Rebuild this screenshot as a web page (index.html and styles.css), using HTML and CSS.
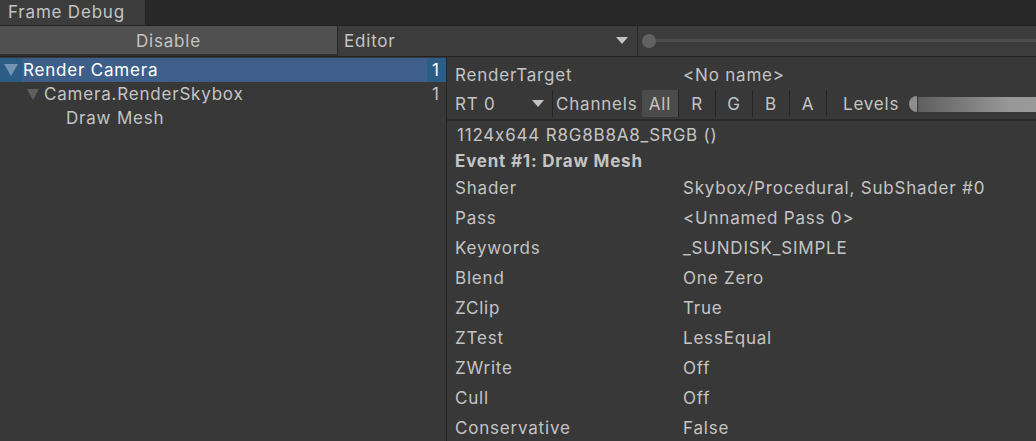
FILE: index.html
```html
<!DOCTYPE html>
<html>
<head>
<meta charset="utf-8">
<link rel="stylesheet" href="styles.css">
</head>
<body>
<div class="window">
  <div class="tabbar">
    <div class="tab">Frame Debug</div>
  </div>
  <div class="toolbar">
    <div class="btn-disable">Disable</div>
    <div class="dropdown">
      <span>Editor</span>
      <svg class="arrow" width="12" height="8" viewBox="0 0 12 8"><path d="M0 0h12L6 7z" fill="#c4c4c4"/></svg>
    </div>
    <div class="event-slider">
      <div class="knob"></div>
      <div class="track"></div>
    </div>
  </div>
  <div class="main">
    <div class="tree">
      <div class="row selected">
        <div class="tri-cell"><svg width="14" height="12" viewBox="0 0 14 12"><path d="M0 0h14L7 12z" fill="#7593b3"/></svg></div>
        <div class="label">Render Camera</div>
        <div class="count">1</div>
      </div>
      <div class="row">
        <div class="indent1"></div>
        <div class="tri-cell"><svg width="12" height="11" viewBox="0 0 12 11"><path d="M0 0h12L6 11z" fill="#5f5f5f"/></svg></div>
        <div class="label">Camera.RenderSkybox</div>
        <div class="count">1</div>
      </div>
      <div class="row">
        <div class="indent2"></div>
        <div class="label">Draw Mesh</div>
      </div>
    </div>
    <div class="details">
      <div class="rt-row">
        <div class="key">RenderTarget</div>
        <div class="val">&lt;No name&gt;</div>
      </div>
      <div class="channels">
        <div class="rt-select"><span>RT 0</span><svg width="12" height="8" viewBox="0 0 12 8"><path d="M0 0h12L6 7z" fill="#c4c4c4"/></svg></div>
        <div class="ch-label">Channels</div>
        <div class="ch active">All</div>
        <div class="ch">R</div>
        <div class="ch">G</div>
        <div class="ch">B</div>
        <div class="ch">A</div>
        <div class="levels">Levels</div>
        <div class="levels-bar"><div class="lv-knob"></div><div class="lv-grad"></div></div>
      </div>
      <div class="info">1124x644 R8G8B8A8_SRGB ()</div>
      <div class="event">Event #1: Draw Mesh</div>
      <div class="props">
        <div class="prop"><div class="key">Shader</div><div class="val">Skybox/Procedural, SubShader #0</div></div>
        <div class="prop"><div class="key">Pass</div><div class="val">&lt;Unnamed Pass 0&gt;</div></div>
        <div class="prop"><div class="key">Keywords</div><div class="val">_SUNDISK_SIMPLE</div></div>
        <div class="prop"><div class="key">Blend</div><div class="val">One Zero</div></div>
        <div class="prop"><div class="key">ZClip</div><div class="val">True</div></div>
        <div class="prop"><div class="key">ZTest</div><div class="val">LessEqual</div></div>
        <div class="prop"><div class="key">ZWrite</div><div class="val">Off</div></div>
        <div class="prop"><div class="key">Cull</div><div class="val">Off</div></div>
        <div class="prop"><div class="key">Conservative</div><div class="val">False</div></div>
      </div>
    </div>
  </div>
</div>
</body>
</html>
```
FILE: styles.css
```css
* { box-sizing: border-box; }
html, body { margin: 0; padding: 0; }
body {
  background: #383838;
  font-family: Inter, "Noto Sans", sans-serif;
  font-size: 17px;
  letter-spacing: 0.8px;
  color: #c4c4c4;
  width: 1036px;
  height: 441px;
  overflow: hidden;
}
.window { display: flex; flex-direction: column; height: 441px; }

.tabbar {
  height: 25px;
  background: #282828;
  display: flex;
}
.tab {
  width: 146px;
  background: #3c3c3c;
  padding-left: 8px;
  line-height: 25px;
  color: #c4c4c4;
  border-right: 1px solid #232323;
}

.toolbar {
  height: 32px;
  background: #3c3c3c;
  display: flex;
  border-top: 1px solid #232323;
  border-bottom: 1px solid #232323;
}
.btn-disable {
  width: 338px;
  background: #505050;
  text-align: center;
  line-height: 29px;
  padding-top: 1px;
  border-right: 1px solid #262626;
  border-bottom: 2px solid #2f2f2f;
}
.dropdown {
  width: 300px;
  display: flex;
  align-items: center;
  justify-content: space-between;
  padding: 0 9px 0 6px;
  border-right: 1px solid #2a2a2a;
  padding-bottom: 1px;
}
.event-slider {
  flex: 1;
  display: flex;
  align-items: center;
  padding-left: 4px;
  padding-bottom: 1px;
}
.knob {
  width: 14px; height: 14px; border-radius: 50%;
  background: #616161;
  flex: none;
}
.track {
  flex: 1;
  height: 3px;
  background: #4c4c4c;
}

.main { flex: 1; display: flex; }
.tree {
  width: 447px;
  border-right: 1px solid #232323;
  padding-top: 1px;
}
.row {
  height: 24px;
  display: flex;
  align-items: center;
}
.row.selected { background: #3e5f8a; color: #ffffff; }
.tri-cell {
  width: 22px; height: 24px;
  display: flex; align-items: center; justify-content: center;
}
.row.selected .tri-cell { background: #2c5d87; }
.row:not(.selected) .tri-cell { width: 20px; }
.indent1 { width: 23px; }
.indent2 { width: 65px; }
.label { flex: 1; padding-left: 1px; }
.count {
  width: 19px;
  height: 24px;
  line-height: 24px;
  text-align: left;
  padding-left: 5px;
}
.row.selected .count { background: #2c5d87; }

.details { flex: 1; padding-top: 3px; }
.rt-row {
  height: 29px;
  display: flex;
  align-items: center;
  padding-left: 8px;
}
.key { width: 228px; flex: none; }
.channels {
  height: 32px;
  display: flex;
  align-items: stretch;
  border-bottom: 2px solid #2a2a2a;
}
.rt-select {
  width: 106px;
  display: flex; align-items: center; justify-content: space-between;
  padding: 0 8px 0 8px;
  border-right: 1px solid #252525;
  margin: 1px 0 2px;
}
.ch-label {
  display: flex; align-items: center;
  padding-left: 3px;
  width: 89px;
}
.ch {
  width: 37px;
  display: flex; align-items: center; justify-content: center;
  border-right: 1px solid #252525;
  margin: 1px 0 2px;
}
.ch.active { background: #4b4b4b; }
.levels {
  display: flex; align-items: center;
  padding-left: 16px;
  width: 82px;
}
.levels-bar {
  flex: 1;
  display: flex; align-items: center;
}
.lv-knob {
  width: 8px; height: 16px;
  background: #8e8e8e;
  border-radius: 8px 0 0 8px;
  flex: none;
}
.lv-grad {
  flex: 1; height: 15px;
  background: linear-gradient(to right, #5e5e5e 0px, #979797 90px, #999999 100%);
  margin-left: 1px;
}
.info { padding-left: 10px; height: 28px; line-height: 28px; }
.event { padding-left: 8px; font-weight: 700; height: 24px; line-height: 24px; }
.props { padding-left: 8px; }
.prop { display: flex; height: 30px; align-items: center; }
```
